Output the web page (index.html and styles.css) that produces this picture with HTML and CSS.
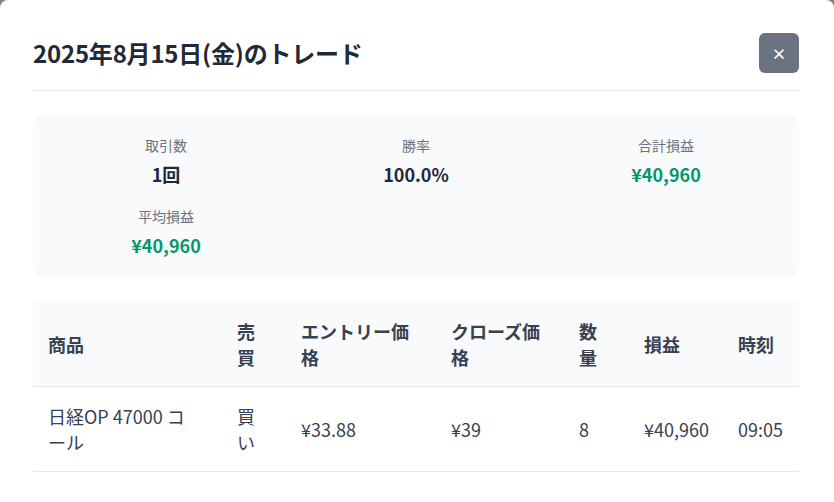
FILE: index.html
```html
<!DOCTYPE html>
<html lang="ja">
<head>
  <meta charset="UTF-8">
  <meta name="viewport" content="width=device-width, initial-scale=1.0">
  <title>トレード詳細</title>
  <link rel="stylesheet" href="styles.css">
</head>
<body>
  <div class="modal">
    <div class="modal-header">
      <h2 class="modal-title">2025年8月15日(金)のトレード</h2>
      <button class="close-btn" type="button">×</button>
    </div>

    <div class="stats">
      <div class="stat">
        <div class="stat-label">取引数</div>
        <div class="stat-value">1回</div>
      </div>
      <div class="stat">
        <div class="stat-label">勝率</div>
        <div class="stat-value">100.0%</div>
      </div>
      <div class="stat">
        <div class="stat-label">合計損益</div>
        <div class="stat-value profit">¥40,960</div>
      </div>
      <div class="stat">
        <div class="stat-label">平均損益</div>
        <div class="stat-value profit">¥40,960</div>
      </div>
    </div>

    <table class="trade-table">
      <colgroup>
        <col class="col-product">
        <col class="col-side">
        <col class="col-entry">
        <col class="col-close">
        <col class="col-qty">
        <col class="col-pnl">
        <col class="col-time">
      </colgroup>
      <thead>
        <tr>
          <th>商品</th>
          <th>売買</th>
          <th>エントリー価格</th>
          <th>クローズ価格</th>
          <th>数量</th>
          <th>損益</th>
          <th>時刻</th>
        </tr>
      </thead>
      <tbody>
        <tr>
          <td class="product">日経OP 47000 コール</td>
          <td>買い</td>
          <td>¥33.88</td>
          <td>¥39</td>
          <td>8</td>
          <td>¥40,960</td>
          <td>09:05</td>
        </tr>
      </tbody>
    </table>
  </div>
</body>
</html>
```

FILE: styles.css
```css
* {
    margin: 0;
    padding: 0;
    box-sizing: border-box;
}

:root {
    --backdrop: #7f7f7f;
    --modal-background: #ffffff;
    --title-color: #1f2937;
    --text-color: #374151;
    --muted-color: #6b7280;
    --border-color: #e5e7eb;
    --panel-background: #f9fafb;
    --profit-color: #059669;
}

body {
    font-family: "Noto Sans CJK JP", "Noto Sans", sans-serif;
    background-color: var(--backdrop);
    color: var(--text-color);
    height: 502px;
    overflow: hidden;
}

.modal {
    background: var(--modal-background);
    border-radius: 8px;
    padding: 32px 35px 0 33px;
    min-height: 520px;
}

.modal-header {
    display: flex;
    align-items: center;
    justify-content: space-between;
    padding: 1px 0 17px;
    border-bottom: 1px solid var(--border-color);
}

.modal-title {
    font-size: 24px;
    font-weight: 700;
    line-height: 40px;
    letter-spacing: -0.2px;
    color: var(--title-color);
}

.close-btn {
    width: 40px;
    height: 40px;
    border: none;
    border-radius: 6px;
    background-color: var(--muted-color);
    color: white;
    font-family: inherit;
    font-size: 15px;
    font-weight: 700;
    cursor: pointer;
}

.stats {
    margin-top: 24px;
    background: var(--panel-background);
    border-radius: 10px;
    padding: 20px 16px 18px;
    display: grid;
    grid-template-columns: repeat(3, 1fr);
    column-gap: 16px;
    row-gap: 18px;
}

.stat {
    text-align: center;
}

.stat-label {
    font-size: 14px;
    line-height: 20px;
    color: var(--muted-color);
}

.stat-value {
    margin-top: 5px;
    font-size: 18px;
    line-height: 28px;
    font-weight: 700;
    color: var(--title-color);
}

.stat-value.profit {
    color: var(--profit-color);
}

.trade-table {
    margin-top: 25px;
    width: 100%;
    border-collapse: collapse;
    table-layout: fixed;
    font-size: 18px;
    line-height: 26px;
}

.col-product { width: 189px; }
.col-side { width: 64px; }
.col-entry { width: 150px; }
.col-close { width: 128px; }
.col-qty { width: 65px; }
.col-pnl { width: 94px; }
.col-time { width: 76px; }

.trade-table th,
.trade-table td {
    padding: 16px 15px;
    text-align: left;
    vertical-align: middle;
    border-bottom: 1px solid var(--border-color);
}

.trade-table th {
    background: var(--panel-background);
    font-weight: 700;
    color: var(--text-color);
}

.trade-table td {
    font-weight: 400;
    color: var(--text-color);
}

.trade-table td.product {
    padding-right: 24px;
}
```
